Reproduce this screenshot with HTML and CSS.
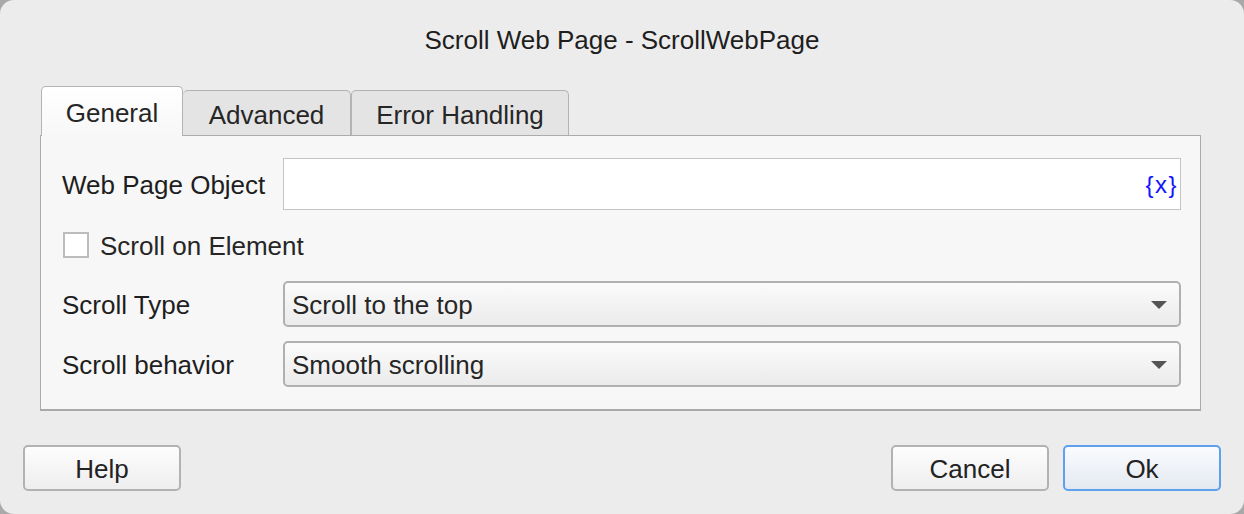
FILE: index.html
```html
<!DOCTYPE html>
<html>
<head>
<meta charset="utf-8">
<link rel="stylesheet" href="styles.css">
</head>
<body>
<div class="window">
  <div class="title">Scroll Web Page - ScrollWebPage</div>
  <div class="tabs">
    <div class="tab tab-active">General</div>
    <div class="tab tab-adv">Advanced</div>
    <div class="tab tab-err">Error Handling</div>
  </div>
  <div class="panel">
    <div class="row row-input">
      <div class="label">Web Page Object</div>
      <div class="input"><span class="var">{x}</span></div>
    </div>
    <div class="row-check">
      <div class="checkbox"></div>
      <div class="check-label">Scroll on Element</div>
    </div>
    <div class="row row-select1">
      <div class="label">Scroll Type</div>
      <div class="select"><span class="sel-text">Scroll to the top</span><span class="arrow"></span></div>
    </div>
    <div class="row row-select2">
      <div class="label">Scroll behavior</div>
      <div class="select"><span class="sel-text">Smooth scrolling</span><span class="arrow"></span></div>
    </div>
  </div>
  <div class="footer">
    <div class="btn">Help</div>
    <div class="spacer"></div>
    <div class="btn">Cancel</div>
    <div class="btn btn-ok">Ok</div>
  </div>
</div>
</body>
</html>
```

FILE: styles.css
```css
html, body {
  margin: 0;
  padding: 0;
  background: #a9a9a9;
}
body {
  width: 1244px;
  height: 514px;
  overflow: hidden;
  font-family: "Liberation Sans", Arial, sans-serif;
  color: #222;
}
.window {
  width: 1244px;
  height: 514px;
  background: #ececec;
  border-radius: 14px;
  box-sizing: border-box;
  overflow: hidden;
}
.title {
  font-size: 26px;
  line-height: 30px;
  text-align: center;
  padding-top: 25px;
  height: 61px;
  box-sizing: border-box;
  margin-bottom: 25px;
  color: #1e1e1e;
}
.tabs {
  display: flex;
  align-items: flex-end;
  height: 50px;
  margin-left: 41px;
  margin-bottom: -1px;
  position: relative;
  z-index: 2;
}
.tab {
  box-sizing: border-box;
  font-size: 26px;
  border: 1px solid #b3b3b3;
  border-bottom: none;
  border-radius: 5px 5px 0 0;
  text-align: center;
  color: #262626;
}
.tab-active {
  width: 142px;
  height: 50px;
  padding-top: 11px;
  background: linear-gradient(#ffffff, #f7f7f7);
}
.tab-adv, .tab-err {
  height: 45px;
  margin-bottom: 1px;
  padding-top: 9px;
  background: #e4e4e4;
}
.tab-adv {
  width: 168px;
  border-left: none;
}
.tab-err {
  width: 218px;
}
.panel {
  margin: 0 43px 0 40px;
  background: #f7f7f7;
  border: 1px solid #ababab;
  border-bottom: 2px solid #a9a9a9;
  padding: 22px 19px 22px 21px;
  position: relative;
  z-index: 1;
}
.row {
  display: flex;
  align-items: center;
}
.label {
  width: 221px;
  flex-shrink: 0;
  font-size: 26px;
  padding-top: 3px;
  color: #1e1e1e;
}
.input {
  flex: 1;
  height: 52px;
  box-sizing: border-box;
  background: #fff;
  border: 1px solid #c4c4c4;
  display: flex;
  align-items: center;
  justify-content: flex-end;
  padding-right: 2px;
}
.var {
  color: #1414ff;
  font-size: 24px;
  letter-spacing: 1.5px;
  padding-top: 2px;
}
.row-check {
  display: flex;
  align-items: center;
  margin-top: 22px;
  height: 26px;
}
.checkbox {
  width: 26px;
  height: 26px;
  box-sizing: border-box;
  border: 2px solid #bcbcbc;
  background: #fff;
  margin-left: 1px;
  margin-right: 11px;
}
.check-label {
  font-size: 26px;
  padding-top: 3px;
  color: #262626;
}
.row-select1 {
  margin-top: 23px;
}
.row-select2 {
  margin-top: 14px;
}
.select {
  flex: 1;
  height: 46px;
  box-sizing: border-box;
  border: 2px solid #b0b0b0;
  border-radius: 5px;
  background: linear-gradient(#fbfbfb, #ebebeb);
  display: flex;
  align-items: center;
  justify-content: space-between;
  padding-left: 7px;
  padding-right: 12px;
  font-size: 26px;
  color: #262626;
}
.sel-text {
  padding-top: 2px;
}
.arrow {
  width: 0;
  height: 0;
  border-left: 8px solid transparent;
  border-right: 8px solid transparent;
  border-top: 8px solid #555;
  margin-top: 2px;
}
.footer {
  display: flex;
  margin-top: 34px;
  padding: 0 23px;
  gap: 14px;
}
.spacer {
  flex: 1;
}
.btn {
  width: 158px;
  height: 46px;
  box-sizing: border-box;
  border: 2px solid #b2b2b2;
  border-radius: 5px;
  background: linear-gradient(#fdfdfd, #eeeeee);
  display: flex;
  align-items: center;
  justify-content: center;
  padding-top: 2px;
  font-size: 26px;
  color: #222;
}
.btn-ok {
  border-color: #5e9ff0;
  background: linear-gradient(#f9fbfe, #e4e9f1);
}
```
